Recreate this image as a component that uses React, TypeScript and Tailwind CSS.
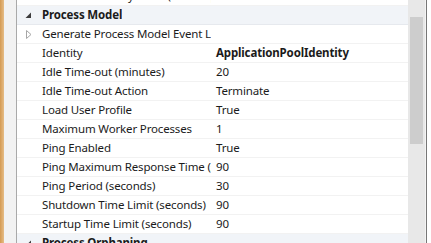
import React from "react";

type Row = { name: string; value?: string; bold?: boolean; expand?: boolean };

const rows: Row[] = [
  { name: "Generate Process Model Event Log Entry", expand: true },
  { name: "Identity", value: "ApplicationPoolIdentity", bold: true },
  { name: "Idle Time-out (minutes)", value: "20" },
  { name: "Idle Time-out Action", value: "Terminate" },
  { name: "Load User Profile", value: "True" },
  { name: "Maximum Worker Processes", value: "1" },
  { name: "Ping Enabled", value: "True" },
  { name: "Ping Maximum Response Time (seconds)", value: "90" },
  { name: "Ping Period (seconds)", value: "30" },
  { name: "Shutdown Time Limit (seconds)", value: "90" },
  { name: "Startup Time Limit (seconds)", value: "90" },
];

const font = { fontFamily: '"Noto Sans", "Open Sans", sans-serif' };

function ExpandedTri() {
  return (
    <svg width="7" height="7" viewBox="0 0 7 7" className="block">
      <polygon points="6,0.5 6,6 0.5,6" fill="#3c3c3c" />
    </svg>
  );
}

function CollapsedTri() {
  return (
    <svg width="6" height="9" viewBox="0 0 6 9" className="block">
      <polygon points="0.5,0.5 5,4.5 0.5,8.5" fill="none" stroke="#a6a6a6" strokeWidth="1" />
    </svg>
  );
}

function PropRow({ r }: { r: Row }) {
  return (
    <div className="flex h-[19px] shrink-0 border-b border-[#f2f2f2] bg-white">
      <div className="flex w-[21px] shrink-0 items-center justify-center pl-[2px]">
        {r.expand ? <CollapsedTri /> : null}
      </div>
      <div className="w-[173px] shrink-0 overflow-hidden whitespace-nowrap pl-[4px] leading-[18px] text-[#1b1b1b]">
        {r.name}
      </div>
      <div
        className={
          "flex-1 overflow-hidden whitespace-nowrap pl-[5px] leading-[18px] text-[#1b1b1b] " +
          (r.bold ? "font-bold" : "")
        }
      >
        {r.value ?? ""}
      </div>
    </div>
  );
}

function CategoryRow({ name }: { name: string }) {
  return (
    <div className="flex h-[19px] shrink-0 border-b border-[#e6e9ee] bg-[#f1f4f8]">
      <div className="flex w-[21px] shrink-0 items-center justify-center pl-[2px]">
        <ExpandedTri />
      </div>
      <div className="overflow-hidden whitespace-nowrap pl-[4px] font-bold leading-[18px] text-[#1b1b1b]">
        {name}
      </div>
    </div>
  );
}

export default function App() {
  return (
    <div
      className="flex h-[243px] w-[431px] overflow-hidden bg-white text-[11.5px] tracking-[-0.15px]"
      style={font}
    >
      <div className="w-[4px] shrink-0 bg-gradient-to-r from-[#d49a52] to-[#e6bd86]" />
      <div className="w-[12px] shrink-0 bg-[#f2f2f2]" />
      <div className="w-px shrink-0 bg-[#a9a9a9]" />
      <div className="flex w-[391px] shrink-0 flex-col overflow-hidden">
        <div className="-mt-[13px] flex flex-col">
          <PropRow r={{ name: "Processor Affinity Mask (64-bit option)" }} />
          <CategoryRow name="Process Model" />
          {rows.map((r) => (
            <PropRow key={r.name} r={r} />
          ))}
          <CategoryRow name="Process Orphaning" />
        </div>
      </div>
      <div className="flex w-[17px] shrink-0 flex-col bg-[#e8e8e8] px-[2px] pt-[17px]">
        <div className="h-[127px] w-full bg-[#cdcdcd]" />
      </div>
      <div className="w-px shrink-0 bg-[#f4f4f4]" />
      <div className="w-px shrink-0 bg-[#777777]" />
      <div className="flex-1 bg-white" />
    </div>
  );
}
